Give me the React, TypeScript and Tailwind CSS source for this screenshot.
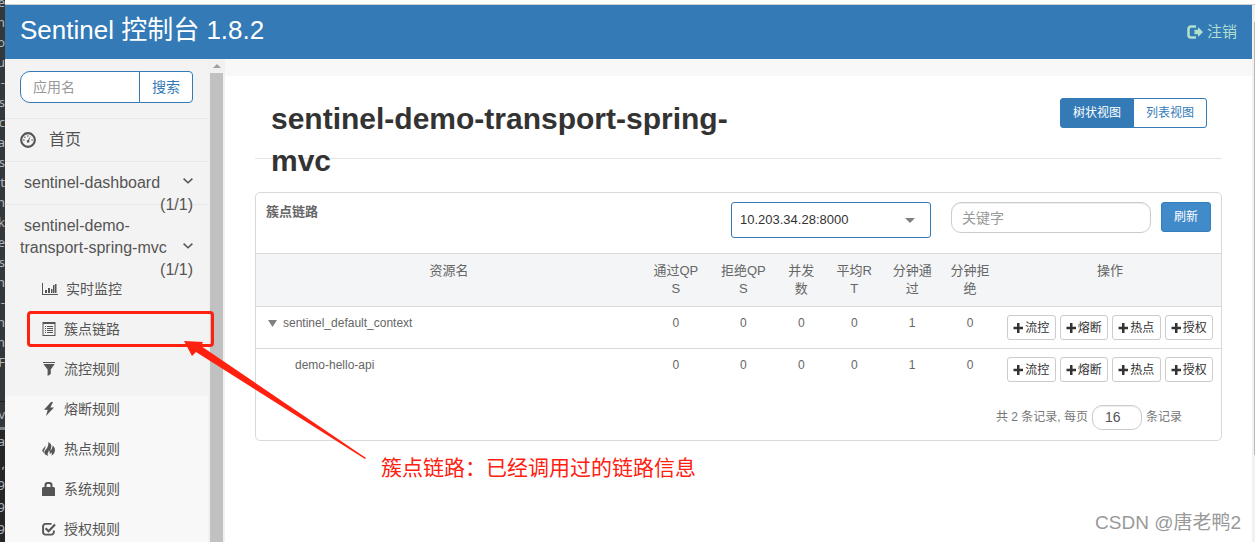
import { ReactNode, useState } from "react";

interface IconProps {
  className?: string;
  viewBox?: string;
  children?: ReactNode;
}

function Icon({ className = "size-[14px]", viewBox = "0 0 14 14", children }: IconProps) {
  return (
    <svg viewBox={viewBox} fill="currentColor" aria-hidden="true" className={`shrink-0 ${className}`}>
      {children}
    </svg>
  );
}

const DashboardIcon = () => (
  <Icon className="size-4">
    <circle cx="7" cy="7" r="6" fill="none" stroke="currentColor" strokeWidth="1.8" />
    <path d="M9.4 3.2 8 7.4a1.2 1.2 0 1 1-1-.4z" />
    <circle cx="3.4" cy="7" r=".7" />
    <circle cx="4.3" cy="4.6" r=".7" />
    <circle cx="6.8" cy="3.5" r=".7" />
    <circle cx="10.6" cy="7" r=".7" />
  </Icon>
);

const StatsIcon = () => (
  <Icon className="h-[14px] w-4" viewBox="0 0 16 14">
    <path d="M0 1h1v11h15v1H0zM3 8h2v3H3zM6 6h2v5H6zM9 7h1.500v4H9zM11 3h1.500v8H11zM13 2h1.500v9H13z" />
  </Icon>
);

const ListIcon = () => (
  <Icon>
    <path
      fillRule="evenodd"
      d="M.5 0h13v14H.5zM1.500 2v11h11V2zM3 4h1v1H3zM5 4h6v1H5zM3 6h1v1H3zM5 6h6v1H5zM3 8h1v1H3zM5 8h6v1H5zM3 10h1v1H3zM5 10h6v1H5z"
    />
  </Icon>
);

const FilterIcon = () => (
  <Icon>
    <path d="M1 0h12v1H1zM1.400 2h11.200L8.800 7.500v4.400L5.600 14V7.500z" />
  </Icon>
);

const FlashIcon = () => (
  <Icon>
    <path d="M9 0 2 7.700h3.700L4 14l8-8.500H8.300L11 0z" />
  </Icon>
);

const FireIcon = () => (
  <Icon>
    <path d="M6.300 0c2.800 1.600 3.600 3.500 2.900 5.600-.5 1.400-.9 2.400-.3 3.300.4-.8.3-1.600 1.100-2.700.6-.9.7-1.700.5-2.600 1.800 1.200 2.700 3 2.400 5.200-.2 2.200-1.500 3.900-3.600 5 .8-1.400.7-2.600-.1-3.500-.2 1-.7 1.500-1.600 1.800.4-1.500.2-2.800-.8-3.900.1 2-1.400 2.600-1.200 4 .1.600.4 1.100.9 1.600C3.600 13.200 2 11.700 2.300 9.900c.3-1.700 2.200-2.600 3-4.300.8-1.900 1.300-3.600 1-5.600zM3.200 3.500c.5 1.900.1 3-.8 4.200-.8 1.100-.9 2.200-.5 3.600C.5 10.200 0 8.900.6 7.600c.7-1.400 2.300-2.200 2.600-4.100z" />
  </Icon>
);

const LockIcon = () => (
  <Icon>
    <path fillRule="evenodd" d="M2.500 5V3a3 3 0 0 1 3-3h2a3 3 0 0 1 3 3v2H12l1 1v8H0V6l1-1zM4.500 5h4V3l-.8-1H5.300l-.8 1z" />
  </Icon>
);

const CheckIcon = () => (
  <Icon>
    <path d="M9.500 1.900H3.400a2.300 2.300 0 0 0-2.300 2.300v6.100a2.300 2.300 0 0 0 2.300 2.300h6.100a2.300 2.300 0 0 0 2.300-2.300V8.500" fill="none" stroke="currentColor" strokeWidth="1.900" />
    <path d="m3.600 6.200 3 3L13 2.500" fill="none" stroke="currentColor" strokeWidth="2.200" />
  </Icon>
);

const LogoutIcon = () => (
  <Icon className="h-[14px] w-4" viewBox="0 0 16 14">
    <path d="M9 1.500H4a2.500 2.500 0 0 0-2.500 2.500v6A2.500 2.500 0 0 0 4 12.500h5" fill="none" stroke="currentColor" strokeWidth="2.600" />
    <path d="M7.500 4.800H11V2l5 5-5 5V9.200H7.500z" />
  </Icon>
);

const PlusIcon = () => (
  <Icon className="size-[10px]" viewBox="0 0 10 10">
    <path d="M4 0h2.500v3.700H10v2.600H6.500V10H4V6.300H.5V3.700H4z" />
  </Icon>
);

const Chevron = () => (
  <svg viewBox="0 0 10 6" className="h-[6px] w-[10px] shrink-0" fill="none" stroke="currentColor" strokeWidth="1.500" aria-hidden="true">
    <path d="m.6.6 4.400 4.200L9.400.6" />
  </svg>
);

const menu = [
  { label: "实时监控", icon: <StatsIcon /> },
  { label: "簇点链路", icon: <ListIcon />, marked: true },
  { label: "流控规则", icon: <FilterIcon /> },
  { label: "熔断规则", icon: <FlashIcon /> },
  { label: "热点规则", icon: <FireIcon /> },
  { label: "系统规则", icon: <LockIcon /> },
  { label: "授权规则", icon: <CheckIcon /> },
];

const columns = [
  { label: "资源名", width: "w-[40%]" },
  { label: "通过QPS", width: "w-[7%]" },
  { label: "拒绝QPS", width: "w-[7%]" },
  { label: "并发数", width: "w-[5%]" },
  { label: "平均RT", width: "w-[6%]" },
  { label: "分钟通过", width: "w-[6%]" },
  { label: "分钟拒绝", width: "w-[6%]" },
  { label: "操作", width: "w-[23%]" },
];

const rows = [
  { name: "sentinel_default_context", parent: true, values: [0, 0, 0, 0, 1, 0] },
  { name: "demo-hello-api", parent: false, values: [0, 0, 0, 0, 1, 0] },
];

const actions = ["流控", "熔断", "热点", "授权"];

const codeEdge = ["e", "n", "o", "u", "-", "s", "c", "a", "s", "t", "n", "k", "e", "s", "h", "-", "n", "n", "F"];
const consoleEdge = ["a", ",", "9", "9", "9", "9"];

// Sliver of the editor window that sits behind the browser
function EditorEdge() {
  return (
    <div
      aria-hidden="true"
      className="flex w-[5px] shrink-0 flex-col overflow-hidden bg-[#35383a] font-['Noto_Sans',sans-serif] text-[13px] text-[#a9b7c6]"
    >
      <div className="-mt-2 flex h-[410px] shrink-0 flex-col items-end border-b border-[#222]">
        {codeEdge.map((text, i) => (
          <span key={i} className="h-5 leading-5">{text}</span>
        ))}
      </div>
      <div className="flex h-7 shrink-0 flex-col items-end border-b-[3px] border-[#7a8288] leading-6">v</div>
      <div className="flex grow flex-col items-end bg-[#262626] leading-[22px]">
        {consoleEdge.map((text, i) => (
          <span key={i}>{text}</span>
        ))}
      </div>
    </div>
  );
}

function Header() {
  return (
    <header className="flex h-[54px] shrink-0 items-center justify-between bg-[#337ab7] px-[15px]">
      <a href="#" className="pb-1 text-[26px] leading-8 text-white">Sentinel 控制台 1.8.2</a>
      <a href="#" className="flex items-center gap-1 text-[15px] text-[#b0dfcc]">
        <LogoutIcon />
        注销
      </a>
    </header>
  );
}

function AppEntry({ name, className }: { name: string; className: string }) {
  return (
    <a href="#" className={`block border-t border-[#e7e7e7] px-[15px] py-[10px] text-base leading-[22px] ${className}`}>
      <span className="flex items-end justify-between">
        <span className="w-[150px] indent-[4px]">{name}</span>
        <span className="flex h-[22px] items-center pb-1">
          <Chevron />
        </span>
      </span>
      <span className="block text-right">(1/1)</span>
    </a>
  );
}

function Sidebar() {
  return (
    <aside className="flex w-[220px] shrink-0">
      <nav className="w-[203px] bg-[linear-gradient(#f3f3f3_337px,#f8f8f8_337px)] text-[#555]">
        <form className="flex h-[59px] px-[15px] pt-3" onSubmit={(e) => e.preventDefault()}>
          <input
            aria-label="应用名"
            placeholder="应用名"
            className="h-8 w-0 grow rounded-l-[10px] border border-[#337ab7] bg-white px-3 text-sm outline-none placeholder:text-[#999]"
          />
          <button className="-ml-px h-8 w-[54px] rounded-r border border-[#337ab7] bg-white text-sm text-[#337ab7]">搜索</button>
        </form>
        <a href="#" className="flex h-[43px] items-center gap-[13px] border-t border-[#e7e7e7] px-[15px] text-base">
          <DashboardIcon />
          首页
        </a>
        <AppEntry name="sentinel-dashboard" className="h-[43px]" />
        <AppEntry name="sentinel-demo-transport-spring-mvc" className="h-[65px]" />
        <ul>
          {menu.map((item) => (
            <li key={item.label} className="relative">
              <a href="#" className="flex h-10 items-center gap-2 pl-[37px] text-sm">
                {item.icon}
                {item.label}
              </a>
              {item.marked && (
                <span className="absolute -right-[6px] bottom-[2px] left-[22px] top-[2px] z-10 rounded border-[3px] border-[#ff2010]" />
              )}
            </li>
          ))}
        </ul>
      </nav>
      <div className="flex grow flex-col items-center bg-[#f1f1f1]" aria-hidden="true">
        <div className="flex h-[14px] items-center">
          <svg viewBox="0 0 8 4" className="h-1 w-2" fill="#a0a0a0">
            <path d="M4 0l4 4H0z" />
          </svg>
        </div>
        <div className="w-[13px] grow bg-[#c1c1c1]" />
      </div>
    </aside>
  );
}

function ResourceTable() {
  return (
    <table className="w-full table-fixed text-xs text-[#666]">
      <thead className="border-y border-[#d9d9d9] bg-[#f3f5f7] text-[13px]">
        <tr>
          {columns.map((column) => (
            <th key={column.label} className={`break-all px-2 py-2 align-top font-normal leading-[18px] ${column.width}`}>
              {column.label}
            </th>
          ))}
        </tr>
      </thead>
      <tbody>
        {rows.map((row) => (
          <tr key={row.name} className="border-b border-[#d9d9d9] last:border-b-0">
            <td className="px-2 py-2 align-top leading-4">
              {row.parent ? (
                <span className="flex items-center">
                  <button aria-label="折叠" className="mr-[6px] ml-1">
                    <svg viewBox="0 0 9 7" className="h-[7px] w-[9px]" fill="#808080">
                      <path d="M0 0h9L4.500 7z" />
                    </svg>
                  </button>
                  {row.name}
                </span>
              ) : (
                <span className="block pl-[31px]">{row.name}</span>
              )}
            </td>
            {row.values.map((value, i) => (
              <td key={i} className="px-2 py-2 text-center align-top leading-4">{value}</td>
            ))}
            <td className="px-2 py-2">
              <div className="flex gap-1">
                {actions.map((action) => (
                  <button
                    key={action}
                    className="flex h-[25px] grow items-center justify-center gap-[2px] whitespace-nowrap rounded-[3px] border border-[#ccc] bg-white text-xs text-[#333]"
                  >
                    <PlusIcon />
                    {action}
                  </button>
                ))}
              </div>
            </td>
          </tr>
        ))}
      </tbody>
    </table>
  );
}

function Content() {
  const [machine, setMachine] = useState("10.203.34.28:8000");
  const [pageSize, setPageSize] = useState("16");

  return (
    <main className="min-w-0 grow border-t-[17px] border-[#f8f8f8] bg-white px-[30px]">
      <div className="flex h-[83px] items-start justify-between border-b border-[#e3e3e3] pl-4 pr-[15px] pt-[22px]">
        <h1 className="w-1/2 text-[30px] font-bold leading-[42px] text-[#333]">sentinel-demo-transport-spring-mvc</h1>
        <div className="flex text-xs">
          <button className="h-[30px] w-[74px] rounded-l-[3px] border border-[#337ab7] bg-[#337ab7] text-white">树状视图</button>
          <button className="-ml-px h-[30px] w-[74px] rounded-r-[3px] border border-[#337ab7] bg-white text-[#337ab7]">列表视图</button>
        </div>
      </div>

      <section className="mt-[33px] rounded-[5px] border border-[#d9d9d9]">
        <div className="flex h-[60px] items-start px-[10px] pt-[9px]">
          <h2 className="grow text-[13px] font-bold leading-5 text-[#666]">簇点链路</h2>
          <div className="relative mr-5">
            <select
              aria-label="机器"
              value={machine}
              onChange={(e) => setMachine(e.target.value)}
              className="h-9 w-[200px] appearance-none rounded-[3px] border border-[#337ab7] bg-white px-2 text-[13px] text-[#333] outline-none"
            >
              <option>10.203.34.28:8000</option>
            </select>
            <svg viewBox="0 0 10 5" className="pointer-events-none absolute right-4 top-4 h-[5px] w-[10px]" fill="#808080" aria-hidden="true">
              <path d="M0 0h10L5 5z" />
            </svg>
          </div>
          <input
            aria-label="关键字"
            placeholder="关键字"
            className="mr-[10px] h-[31px] w-[200px] rounded-[10px] border border-[#ccc] px-[10px] text-sm shadow-[inset_0_1px_1px_rgba(0,0,0,0.075)] outline-none placeholder:text-[#999]"
          />
          <button className="h-[30px] w-[50px] rounded-[3px] border border-[#357ebd] bg-[#428bca] text-xs text-white">刷新</button>
        </div>
        <ResourceTable />
        <div className="flex h-[50px] items-center justify-end gap-1 pr-[39px] pt-1 text-xs text-[#777]">
          <label htmlFor="page-size">共 2 条记录, 每页</label>
          <input
            id="page-size"
            value={pageSize}
            onChange={(e) => setPageSize(e.target.value)}
            className="h-[25px] w-[50px] rounded-[10px] border border-[#ccc] px-3 text-sm text-[#555] shadow-[inset_0_1px_1px_rgba(0,0,0,0.075)] outline-none"
          />
          <span>条记录</span>
        </div>
      </section>
    </main>
  );
}

export default function App() {
  return (
    <div className="relative flex h-screen overflow-hidden bg-white font-['Liberation_Sans','Noto_Sans_CJK_SC',sans-serif]">
      <EditorEdge />
      <div className="flex min-w-0 grow flex-col border-t border-white pt-[3px]">
        <div className="flex min-h-0 grow border-t border-[#d0d0d0]">
          <div className="flex min-w-0 grow flex-col">
            <Header />
            <div className="flex min-h-0 grow">
              <Sidebar />
              <Content />
            </div>
          </div>
          <div className="flex w-[3px] shrink-0 flex-col items-end bg-[#f1f1f1] pt-[17px]" aria-hidden="true">
            <div className="h-5/6 w-px bg-[#b8b8b8]" />
          </div>
        </div>
      </div>

      <svg viewBox="0 0 182 118" className="absolute left-[184px] top-[341px] z-20 h-[118px] w-[182px]" fill="#ff2010" aria-hidden="true">
        <path d="M0 0 19 1 17 5 182 117 181 118 12 11 8 15z" />
      </svg>
      <p className="absolute left-[381px] top-[453px] z-20 text-[21px] leading-[30px] text-[#ff2010]">簇点链路：已经调用过的链路信息</p>
      <p className="absolute bottom-[6px] right-[14px] text-[19px] leading-[26px] text-[#999]">CSDN @唐老鸭2</p>
    </div>
  );
}
